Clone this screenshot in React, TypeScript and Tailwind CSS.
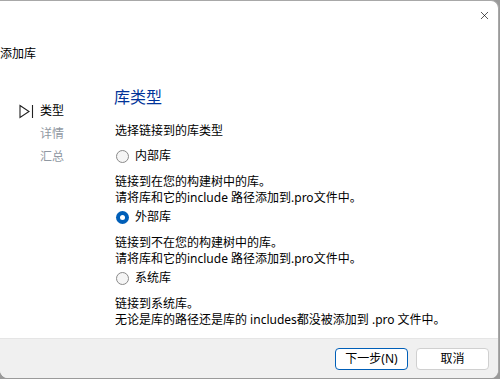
import { X } from "lucide-react";

const font = { fontFamily: '"Noto Sans", "Noto Sans CJK SC", sans-serif' };

function Radio({ checked }: { checked?: boolean }) {
  if (checked) {
    return (
      <span className="flex h-[13px] w-[13px] items-center justify-center rounded-full bg-[#005fb8]">
        <span className="h-[5px] w-[5px] rounded-full bg-white" />
      </span>
    );
  }
  return <span className="h-[13px] w-[13px] rounded-full border border-[#8a8a8a] bg-[#f5f5f5]" />;
}

function Option({ label, checked, lines }: { label: string; checked?: boolean; lines: string[] }) {
  return (
    <div className="pb-[1px]">
      <div className="flex h-[20px] items-center gap-[6px] pl-[1px]">
        <Radio checked={checked} />
        <span className="text-[12px] leading-[20px]">{label}</span>
      </div>
      <div className="mt-[8px] text-[12px] leading-[16px]">
        {lines.map((l) => (
          <div key={l}>{l}</div>
        ))}
      </div>
    </div>
  );
}

export default function App() {
  return (
    <div className="h-[379px] w-[500px] overflow-hidden bg-[#9a9a9a]" style={font}>
      <div className="flex h-[378px] w-[499px] flex-col overflow-hidden rounded-r-[8px] rounded-bl-[8px] border-t border-r border-[#a8a8a8] bg-white text-black">
        {/* title bar */}
        <div className="flex h-[29px] items-center justify-end pr-[8px]">
          <X size={13} strokeWidth={1.2} className="-mr-[1px]" />
        </div>

        <div className="mt-[16px] text-[12px] leading-[16px]">添加库</div>

        <div className="flex flex-1 pt-[24px]">
          {/* steps */}
          <div className="w-[113px] pt-[15px] pl-[19px]">
            <div className="flex h-[20px] items-center gap-[6px]">
              <svg width="15" height="15" viewBox="0 0 15 15" fill="none" stroke="#222" strokeWidth="1.1">
                <path d="M1 1.5 L10 7.5 L1 13.5 Z" />
                <path d="M13.5 1 V14" />
              </svg>
              <span className="text-[12px]">类型</span>
            </div>
            <div className="mt-[3px] pl-[21px] text-[12px] leading-[20px] text-[#9098a2]">详情</div>
            <div className="mt-[3px] pl-[21px] text-[12px] leading-[20px] text-[#9098a2]">汇总</div>
          </div>

          {/* page */}
          <div className="flex-1 pl-[1px]">
            <div className="text-[16px] leading-[22px] text-[#003399]">库类型</div>
            <div className="mt-[15px] pl-[1px] text-[12px] leading-[16px]">选择链接到的库类型</div>
            <div className="mt-[7px] flex flex-col pl-[1px]">
              <Option label="内部库" lines={["链接到在您的构建树中的库。", "请将库和它的include 路径添加到.pro文件中。"]} />
              <Option checked label="外部库" lines={["链接到不在您的构建树中的库。", "请将库和它的include 路径添加到.pro文件中。"]} />
              <Option label="系统库" lines={["链接到系统库。", "无论是库的路径还是库的 includes都没被添加到 .pro 文件中。"]} />
            </div>
          </div>
        </div>

        {/* footer */}
        <div className="flex h-[40px] items-start justify-end gap-[8px] border-t border-[#e5e5e5] bg-[#f0f0f0] pt-[9px] pr-[9px]">
          <button className="h-[22px] w-[73px] rounded-[4px] border border-[#005fb8] bg-white text-[12px] leading-[20px]">
            下一步(N)
          </button>
          <button className="h-[22px] w-[73px] rounded-[4px] border border-[#d0d0d0] bg-white text-[12px] leading-[20px]">
            取消
          </button>
        </div>
      </div>
    </div>
  );
}
